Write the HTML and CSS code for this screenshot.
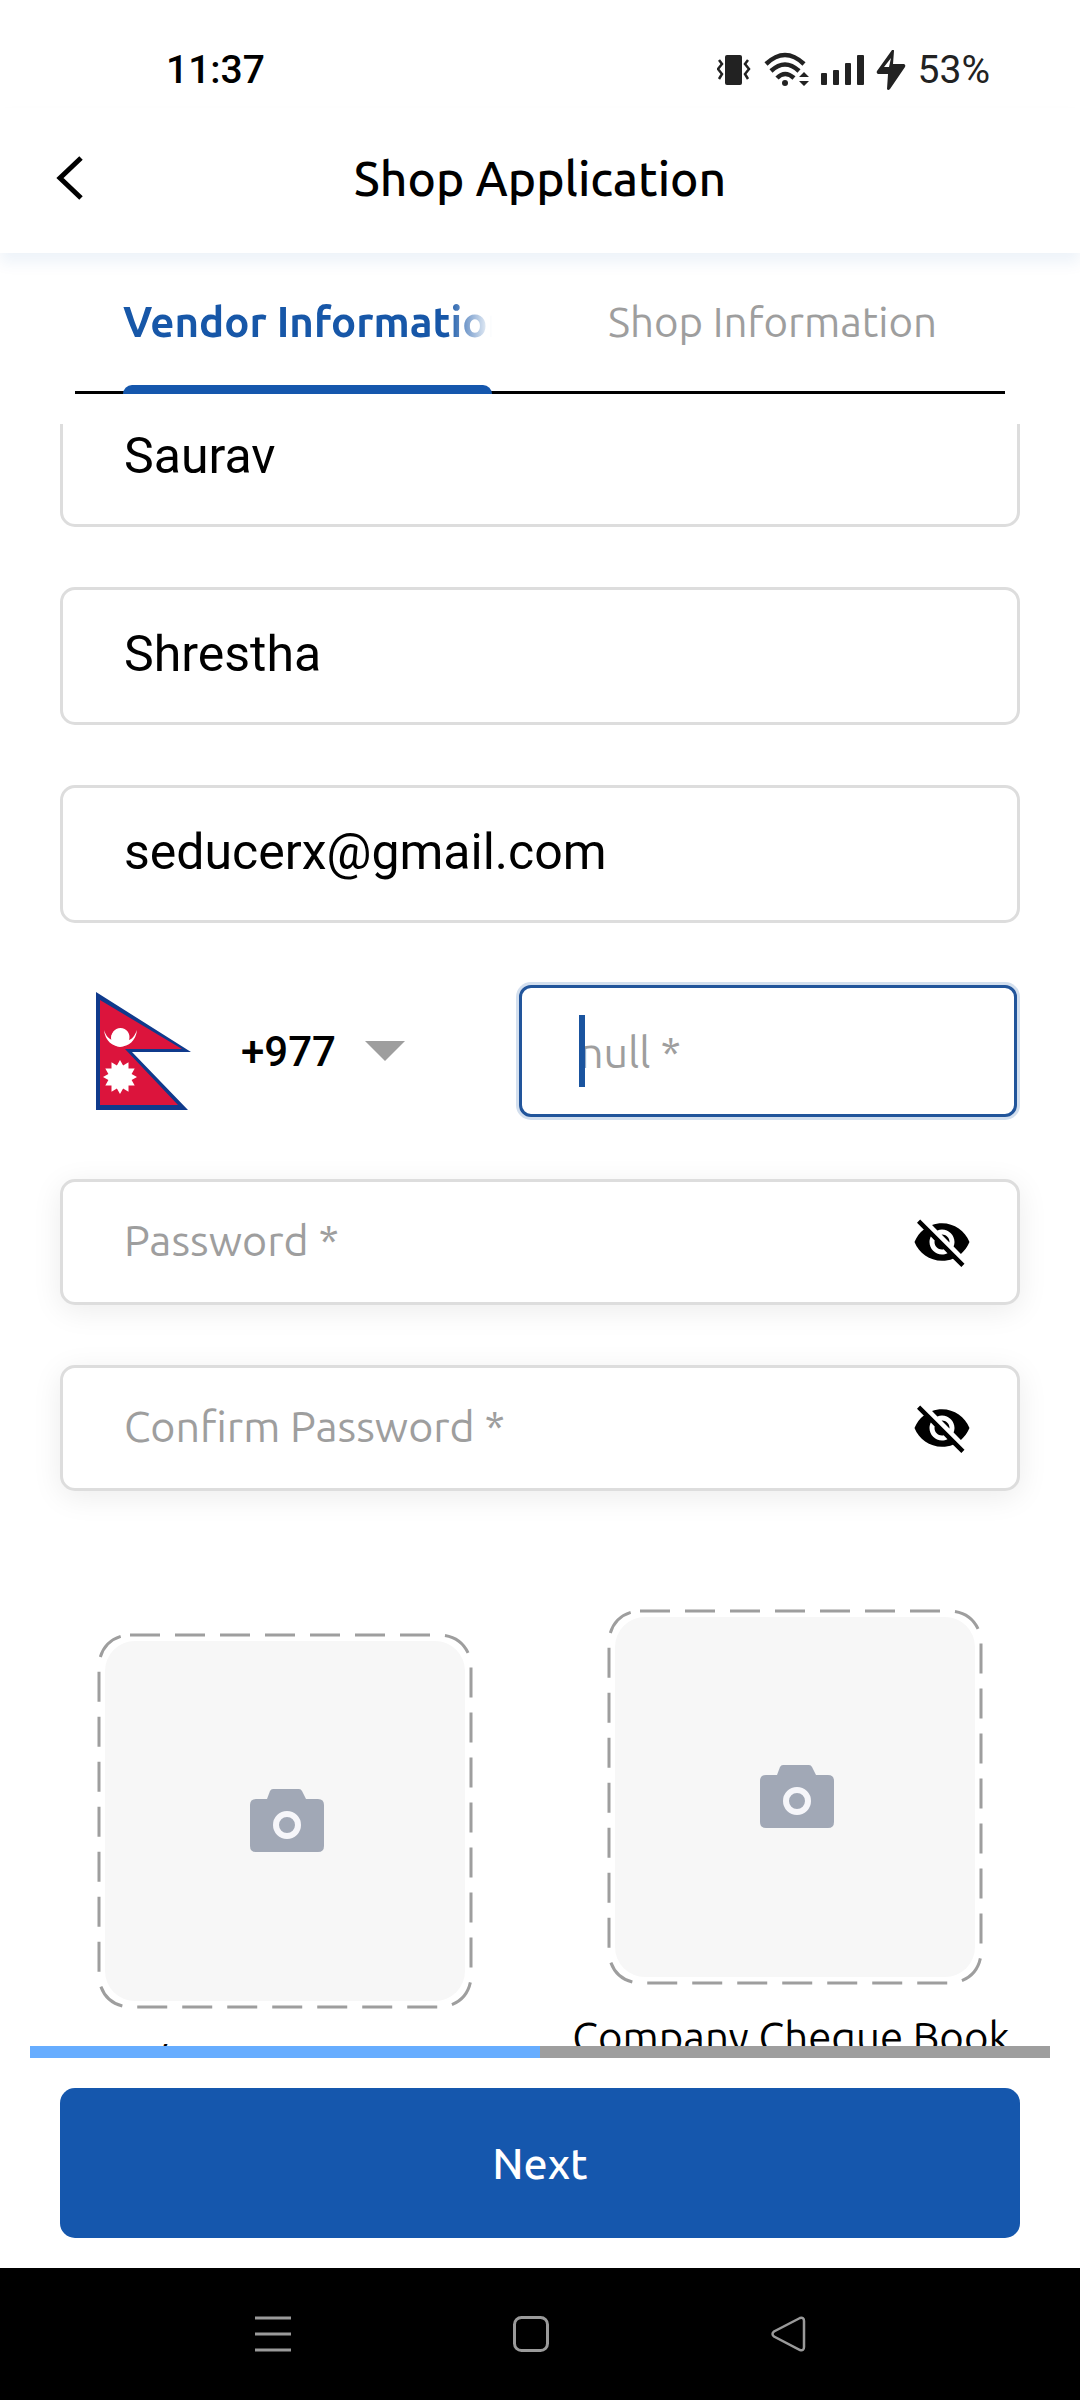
FILE: index.html
```
<!DOCTYPE html>
<html lang="en">
<head>
    <meta charset="UTF-8">
    <meta name="viewport" content="width=device-width, initial-scale=1.0">
    <title>Shop Application</title>
    <link rel="stylesheet" href="styles.css">
</head>
<body>
    <div class="app">
        <div class="status-bar">
            <span class="status-time">11:37</span>
            <div class="status-icons">
                <!-- vibrate -->
                <svg width="34" height="40" viewBox="0 0 34 40">
                    <rect x="8" y="5" width="17" height="30" rx="2" fill="#222"/>
                    <path d="M2 10l3 4-4 5 4 5-3 5M31 10l-3 4 4 5-4 5 3 5" fill="none" stroke="#222" stroke-width="2.500"/>
                </svg>
                <!-- wifi -->
                <svg width="46" height="40" viewBox="-2 0 46 40">
                    <g fill="none" stroke="#222" stroke-width="4.500">
                        <path d="M1 14Q20 -4 39 14"/>
                        <path d="M6 21Q20 8 34 21"/>
                        <path d="M12 28Q20 20 29 28"/>
                    </g>
                    <circle cx="20" cy="33" r="3" fill="#222"/>
                    <path d="M39 22l5 5H34zM39 36l5-5H34z" fill="#222"/>
                </svg>
                <!-- signal -->
                <svg width="43" height="40" viewBox="0 0 43 40">
                    <g fill="#222">
                        <rect x="0" y="23" width="6" height="12" rx="1"/>
                        <rect x="12" y="20" width="6" height="15" rx="1"/>
                        <rect x="24" y="13" width="6" height="22" rx="1"/>
                        <rect x="36" y="5" width="7" height="30" rx="1"/>
                    </g>
                </svg>
                <!-- charging -->
                <svg width="30" height="40" viewBox="0 0 30 40">
                    <path fill="#222" fill-rule="evenodd" d="M16 0q2-1 2 1l-1 13h11q2 1 1 3L14 39q-2 2-3 0l1-15H2q-2-1-1-3zM15 8L8 17h5z"/>
                </svg>
                <span class="status-battery">53%</span>
            </div>
        </div>

        <header class="header">
            <button type="button" class="back" aria-label="Back">
                <svg width="28" height="44" viewBox="0 0 28 44">
                    <path d="M25 2L4 22l21 20" fill="none" stroke="#000" stroke-width="5"/>
                </svg>
            </button>
            <h1>Shop Application</h1>
        </header>

        <nav class="tabs">
            <a href="#vendor" class="tab active"><span>Vendor Information</span></a>
            <a href="#shop" class="tab"><span>Shop Information</span></a>
        </nav>

        <form class="vendor-form" id="vendorForm">
            <div class="form-scroll">
                <input type="text" class="field field-first" name="firstName" aria-label="First Name" value="Saurav">
                <input type="text" class="field" name="lastName" aria-label="Last Name" value="Shrestha">
                <input type="email" class="field" name="email" aria-label="Email" value="seducerx@gmail.com">

                <div class="phone-row">
                    <div class="country">
                        <svg class="flag" width="95" height="118" viewBox="0 0 95 118">
                            <path fill="#0f3a8c" d="M0 0l95 60H36l56 58H0z"/>
                            <path fill="#dc143c" d="M4 8l82 49H29l53 56H4z"/>
                            <path fill="#fff" d="M8 38c2 22 31 22 33 0-3 7-5 9-8 10a9 9 0 1 0-17 0c-4-2-6-4-8-10z"/>
                            <path fill="#fff" d="M16 46h17l-8 6z"/>
                            <polygon fill="#fff" points="41,85 35.6,88.1 38.7,93.5 32.5,93.5 32.5,99.7 27.1,96.6 24,102 20.9,96.6 15.5,99.7 15.5,93.5 9.3,93.5 12.4,88.1 7,85 12.4,81.9 9.3,76.5 15.5,76.5 15.5,70.3 20.9,73.4 24,68 27.1,73.4 32.5,70.3 32.5,76.5 38.7,76.5 35.6,81.9"/>
                            <circle cx="24" cy="46" r="9" fill="#fff"/>
                        </svg>
                        <select name="countryCode" aria-label="Country code">
                            <option>+977</option>
                        </select>
                        <svg class="arrow" width="40" height="20" viewBox="0 0 40 20">
                            <path fill="#9e9e9e" d="M0 0h40L20 20z"/>
                        </svg>
                    </div>
                    <div class="phone-box">
                        <input type="tel" class="field field-focus" name="phone" aria-label="Phone" placeholder="null *">
                        <span class="caret"></span>
                    </div>
                </div>

                <div class="password-box">
                    <input type="password" name="password" aria-label="Password" placeholder="Password *">
                    <button type="button" aria-label="Show password">
                        <svg width="60" height="60" viewBox="0 0 24 24">
                            <path d="M12 7c2.76 0 5 2.24 5 5 0 .65-.13 1.26-.36 1.83l2.92 2.92c1.51-1.26 2.7-2.89 3.43-4.75-1.73-4.39-6-7.5-11-7.5-1.4 0-2.74.25-3.98.7l2.16 2.16C10.74 7.13 11.35 7 12 7zM2 4.27l2.28 2.28.46.46C3.08 8.3 1.78 10.02 1 12c1.73 4.39 6 7.5 11 7.5 1.55 0 3.03-.3 4.38-.84l.42.42L19.73 22 21 20.73 3.27 3 2 4.27zM7.53 9.8l1.55 1.55c-.05.21-.08.43-.08.65 0 1.66 1.34 3 3 3 .22 0 .44-.03.65-.08l1.55 1.55c-.67.33-1.41.53-2.2.53-2.76 0-5-2.24-5-5 0-.79.2-1.53.53-2.2zm4.31-.78l3.15 3.15.02-.16c0-1.66-1.34-3-3-3l-.17.01z"/>
                        </svg>
                    </button>
                </div>
                <div class="password-box">
                    <input type="password" name="confirmPassword" aria-label="Confirm Password" placeholder="Confirm Password *">
                    <button type="button" aria-label="Show password">
                        <svg width="60" height="60" viewBox="0 0 24 24">
                            <path d="M12 7c2.76 0 5 2.24 5 5 0 .65-.13 1.26-.36 1.83l2.92 2.92c1.51-1.26 2.7-2.89 3.43-4.75-1.73-4.39-6-7.5-11-7.5-1.4 0-2.74.25-3.98.7l2.16 2.16C10.74 7.13 11.35 7 12 7zM2 4.27l2.28 2.28.46.46C3.08 8.3 1.78 10.02 1 12c1.73 4.39 6 7.5 11 7.5 1.55 0 3.03-.3 4.38-.84l.42.42L19.73 22 21 20.73 3.27 3 2 4.27zM7.53 9.8l1.55 1.55c-.05.21-.08.43-.08.65 0 1.66 1.34 3 3 3 .22 0 .44-.03.65-.08l1.55 1.55c-.67.33-1.41.53-2.2.53-2.76 0-5-2.24-5-5 0-.79.2-1.53.53-2.2zm4.31-.78l3.15 3.15.02-.16c0-1.66-1.34-3-3-3l-.17.01z"/>
                        </svg>
                    </button>
                </div>

                <div class="uploads">
                    <div class="upload upload-low">
                        <button type="button" aria-label="Upload document">
                            <svg width="376" height="376" viewBox="0 0 376 376">
                                <rect x="8" y="8" width="360" height="360" rx="30" fill="#f7f7f7"/>
                                <rect x="2" y="2" width="372" height="372" rx="31" fill="none" stroke="#9e9e9e" stroke-width="3" stroke-dasharray="30 15"/>
                                <path fill="#a1a8b6" d="M160 166h13l3-8q1-2 3-2h26q2 0 3 2l4 8h12q6 0 6 6v41q0 6-6 6h-62q-6 0-6-6v-41q0-6 6-6z" transform="translate(-3 0)"/>
                                <circle cx="190" cy="192" r="11" fill="none" stroke="#f6f6fa" stroke-width="6"/>
                            </svg>
                        </button>
                        <span class="upload-label upload-label-start">/</span>
                    </div>
                    <div class="upload">
                        <button type="button" aria-label="Upload company cheque book">
                            <svg width="376" height="376" viewBox="0 0 376 376">
                                <rect x="8" y="8" width="360" height="360" rx="30" fill="#f7f7f7"/>
                                <rect x="2" y="2" width="372" height="372" rx="31" fill="none" stroke="#9e9e9e" stroke-width="3" stroke-dasharray="30 15"/>
                                <path fill="#a1a8b6" d="M160 166h13l3-8q1-2 3-2h26q2 0 3 2l4 8h12q6 0 6 6v41q0 6-6 6h-62q-6 0-6-6v-41q0-6 6-6z" transform="translate(-3 0)"/>
                                <circle cx="190" cy="192" r="11" fill="none" stroke="#f6f6fa" stroke-width="6"/>
                            </svg>
                        </button>
                        <span class="upload-label">Company Cheque Book</span>
                    </div>
                </div>
            </div>

            <progress class="steps" value="1" max="2" aria-label="Step 1 of 2"></progress>
            <button type="submit" class="next">Next</button>
        </form>

        <div class="nav-bar">
            <button type="button" aria-label="Recent apps">
                <svg width="36" height="36" viewBox="0 0 36 36">
                    <path d="M0 2h36M0 18h36M0 34h36" stroke="#9a9a9a" stroke-width="3"/>
                </svg>
            </button>
            <button type="button" aria-label="Home">
                <svg width="36" height="36" viewBox="0 0 36 36">
                    <rect x="1.500" y="1.500" width="33" height="33" rx="7" fill="none" stroke="#9a9a9a" stroke-width="3"/>
                </svg>
            </button>
            <button type="button" aria-label="Back">
                <svg width="36" height="36" viewBox="0 0 36 36">
                    <path d="M29 2L3 15.500q-3 2.500 0 5L29 34q4 1 4-3V5q0-4-4-3z" fill="none" stroke="#9a9a9a" stroke-width="2.500"/>
                </svg>
            </button>
        </div>
    </div>
</body>
</html>
```
FILE: styles.css
```
* {
    box-sizing: border-box;
}
body {
    margin: 0;
    background-color: #fff;
    color: #000;
    font-family: Ubuntu, "Noto Sans", sans-serif;
    font-size: 42px;
}
button {
    padding: 0;
    border: none;
    background: none;
    font-family: inherit;
    cursor: pointer;
}
svg {
    display: block;
}
.app {
    display: flex;
    flex-direction: column;
    height: 100vh;
}

/* status bar */
.status-bar {
    display: flex;
    justify-content: space-between;
    align-items: center;
    height: 108px;
    padding: 32px 90px 0 166px;
    font-family: Roboto, sans-serif;
    font-size: 39px;
}
.status-time {
    font-weight: 500;
}
.status-icons {
    display: flex;
    align-items: center;
    gap: 12px;
    color: #222;
}

/* header */
.header {
    display: grid;
    grid-template-columns: 60px 1fr 60px;
    align-items: center;
    height: 145px;
    padding: 0 56px 5px;
    box-shadow: 0 10px 14px rgba(21, 87, 173, 0.07);
}
h1 {
    margin: 0;
    font-size: 48px;
    font-weight: 500;
    text-align: center;
}

/* tabs */
.tabs {
    display: grid;
    grid-template-columns: repeat(2, minmax(0, 1fr));
    height: 141px;
    margin: 0 75px;
    border-bottom: 3px solid #000;
}
.tab {
    display: flex;
    justify-content: center;
    margin: 0 48px -3px;
    padding-top: 39px;
    color: #9e9e9e;
    line-height: 60px;
    text-decoration: none;
    white-space: nowrap;
}
.tab.active {
    justify-content: flex-start;
    position: relative;
    color: #1757a8;
    font-weight: 700;
}
.tab.active span {
    overflow: hidden;
    -webkit-mask-image: linear-gradient(to right, #000 88%, transparent);
    mask-image: linear-gradient(to right, #000 88%, transparent);
}
.tab.active::after {
    content: "";
    position: absolute;
    left: 0;
    right: 0;
    bottom: 0;
    height: 9px;
    border-radius: 9px 9px 0 0;
    background-color: #1557ad;
}

/* form */
.vendor-form {
    display: flex;
    flex-direction: column;
    flex: 1;
    min-height: 0;
    padding: 30px 30px;
}
.form-scroll {
    display: flex;
    flex-direction: column;
    flex: 1;
    gap: 60px;
    min-height: 0;
    margin: 0 -30px;
    padding: 0 60px;
    overflow: hidden;
}
.form-scroll > * {
    flex-shrink: 0;
}
.field {
    width: 100%;
    height: 138px;
    padding: 0 61px 4px;
    border: 3px solid #ddd;
    border-radius: 15px;
    background-color: #fff;
    color: #000;
    font-family: Roboto, sans-serif;
    font-size: 50px;
    outline: none;
}
/* scrolled partly under the tabs */
.field-first {
    margin-top: -35px;
}
input::placeholder {
    color: #9e9e9e;
    font-family: Ubuntu, "Noto Sans", sans-serif;
    font-size: 43px;
    opacity: 1;
}
.phone-row {
    display: grid;
    grid-template-columns: 1fr 504px;
    align-items: center;
    margin: -1px 0;
}
.country {
    display: flex;
    align-items: center;
    padding-left: 36px;
}
.country select {
    width: 124px;
    margin-left: 50px;
    padding: 0;
    border: none;
    background: none;
    appearance: none;
    color: #000;
    font-family: Roboto, sans-serif;
    font-size: 42px;
    font-weight: 500;
}
.arrow {
    pointer-events: none;
}
.phone-box {
    position: relative;
    padding: 3px;
    border-radius: 15px;
    background-color: #d3dfee;
}
.field-focus {
    display: block;
    height: 132px;
    padding: 0 57px;
    border-color: #22559b;
    border-radius: 12px;
    caret-color: transparent;
}
.caret {
    position: absolute;
    left: 63px;
    top: 33px;
    width: 6px;
    height: 72px;
    background-color: #1a549f;
}
.password-box {
    display: flex;
    align-items: center;
    height: 126px;
    padding-right: 45px;
    border: 3px solid #ddd;
    border-radius: 15px;
    background-color: #fff;
    box-shadow: 0 6px 30px rgba(0, 0, 0, 0.08);
}
.password-box input {
    flex: 1;
    min-width: 0;
    height: 100%;
    padding: 0 61px 4px;
    border: none;
    background: none;
    font-family: Ubuntu, "Noto Sans", sans-serif;
    font-size: 43px;
    outline: none;
}

/* uploads */
.uploads {
    display: grid;
    grid-template-columns: repeat(2, minmax(0, 1fr));
    margin: 58px -30px 0;
}
.upload {
    display: flex;
    flex-direction: column;
    align-items: center;
    gap: 22px;
}
.upload-low {
    padding-top: 24px;
}
.upload-label {
    padding-right: 8px;
    line-height: 60px;
    white-space: nowrap;
}
.upload-label-start {
    align-self: flex-start;
    padding-left: 121px;
}

/* footer */
.steps {
    display: block;
    flex: none;
    width: 100%;
    height: 12px;
    border: none;
    background-color: #9e9e9e;
    appearance: none;
}
.steps::-webkit-progress-bar {
    background-color: #9e9e9e;
}
.steps::-webkit-progress-value {
    background-color: #67adff;
}
.next {
    flex: none;
    height: 150px;
    margin: 30px 30px 0;
    border-radius: 15px;
    background-color: #1557ad;
    color: #fff;
    font-size: 43px;
    font-weight: 500;
}

.nav-bar {
    display: flex;
    flex: none;
    justify-content: center;
    align-items: center;
    gap: 222px;
    height: 132px;
    padding-right: 18px;
    background-color: #000;
}
```
